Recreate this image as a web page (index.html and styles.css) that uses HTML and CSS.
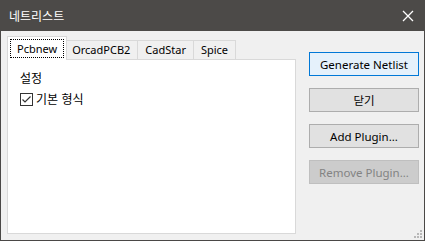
FILE: index.html
```html
<!DOCTYPE html>
<html lang="ko">
<head>
<meta charset="utf-8">
<title>네트리스트</title>
<link rel="stylesheet" href="styles.css">
</head>
<body>
<div class="window">
  <div class="titlebar">
    <span class="title">네트리스트</span>
    <svg class="close" width="12" height="12" viewBox="0 0 12 12">
      <path d="M1 1L11 11M11 1L1 11" stroke="#fff" stroke-width="1.3" fill="none"/>
    </svg>
  </div>
  <div class="client">
    <div class="notebook">
      <ul class="tabs">
        <li class="active"><span class="focus">Pcbnew</span></li>
        <li>OrcadPCB2</li>
        <li>CadStar</li>
        <li>Spice</li>
      </ul>
      <div class="panel">
        <div class="group-label">설정</div>
        <label class="check">
          <span class="box">
            <svg width="11" height="11" viewBox="0 0 11 11">
              <path d="M1.5 5.5L4 8L9.5 2.5" stroke="#333" stroke-width="1.2" fill="none"/>
            </svg>
          </span>
          기본 형식
        </label>
      </div>
    </div>
    <div class="buttons">
      <button class="btn default">Generate Netlist</button>
      <button class="btn">닫기</button>
      <button class="btn">Add Plugin...</button>
      <button class="btn" disabled>Remove Plugin...</button>
    </div>
    <svg class="grip" width="9" height="9" viewBox="0 0 9 9">
      <rect x="7" y="1" width="2" height="2" fill="#b8b8b8"/>
      <rect x="4" y="4" width="2" height="2" fill="#b8b8b8"/>
      <rect x="7" y="4" width="2" height="2" fill="#b8b8b8"/>
      <rect x="1" y="7" width="2" height="2" fill="#b8b8b8"/>
      <rect x="4" y="7" width="2" height="2" fill="#b8b8b8"/>
      <rect x="7" y="7" width="2" height="2" fill="#b8b8b8"/>
    </svg>
  </div>
</div>
</body>
</html>
```

FILE: styles.css
```css
body {
    margin: 0;
    font-family: "Noto Sans", "Noto Sans CJK KR", sans-serif;
    font-size: 11px;
    color: #000;
}
.window {
    width: 425px;
    height: 241px;
    box-sizing: border-box;
    border: solid 1px #4a4846;
    border-top: none;
    display: flex;
    flex-direction: column;
    background: #f0f0f0;
}
.titlebar {
    height: 31px;
    background: #4c4a48;
    display: flex;
    align-items: center;
    justify-content: space-between;
    padding: 0 11px 0 9px;
    margin: 0 -1px;
}
.title {
    color: #fff;
    font-family: "Noto Sans CJK KR", sans-serif;
    font-size: 12px;
}
.client {
    flex: 1;
    position: relative;
    display: flex;
    padding: 5px 0 0 6px;
}
.notebook {
    width: 289px;
    display: flex;
    flex-direction: column;
}
.tabs {
    list-style: none;
    margin: 0;
    padding: 0 0 0 2px;
    display: flex;
    align-items: flex-end;
    height: 23px;
}
.tabs li {
    height: 19px;
    line-height: 18px;
    box-sizing: border-box;
    border: solid 1px #d9d9d9;
    border-bottom: none;
    margin-left: -1px;
    padding: 0 7px;
    background: #f0f0f0;
}
.tabs li.active {
    height: 24px;
    margin: 0 -2px -1px -2px;
    padding: 2px 2px 0 2px;
    background: #fff;
    position: relative;
    z-index: 1;
}
.focus {
    display: block;
    border: dotted 1px #000;
    padding: 0 6px;
    line-height: 17px;
}
.panel {
    height: 175px;
    box-sizing: border-box;
    background: #fff;
    border: solid 1px #d9d9d9;
    padding: 9px 12px;
    font-family: "Noto Sans CJK KR", sans-serif;
    font-size: 12px;
}
.group-label {
    line-height: 18px;
}
.check {
    display: flex;
    align-items: center;
    gap: 3px;
    margin-top: 3px;
    line-height: 18px;
}
.box {
    width: 13px;
    height: 13px;
    box-sizing: border-box;
    border: solid 1px #333;
    display: flex;
    align-items: center;
    justify-content: center;
}
.buttons {
    margin: 16px 0 0 13px;
    display: flex;
    flex-direction: column;
    gap: 12px;
}
.btn {
    width: 110px;
    height: 24px;
    font-family: "Noto Sans", "Noto Sans CJK KR", sans-serif;
    font-size: 11.5px;
    background: #e1e1e1;
    border: solid 1px #adadad;
    color: #000;
    padding: 0;
}
.btn.default {
    background: #e5f1fb;
    border-color: #0078d7;
}
.btn:disabled {
    background: #cccccc;
    border-color: #bfbfbf;
    color: #838383;
}
.grip {
    position: absolute;
    right: 2px;
    bottom: 2px;
}
```
